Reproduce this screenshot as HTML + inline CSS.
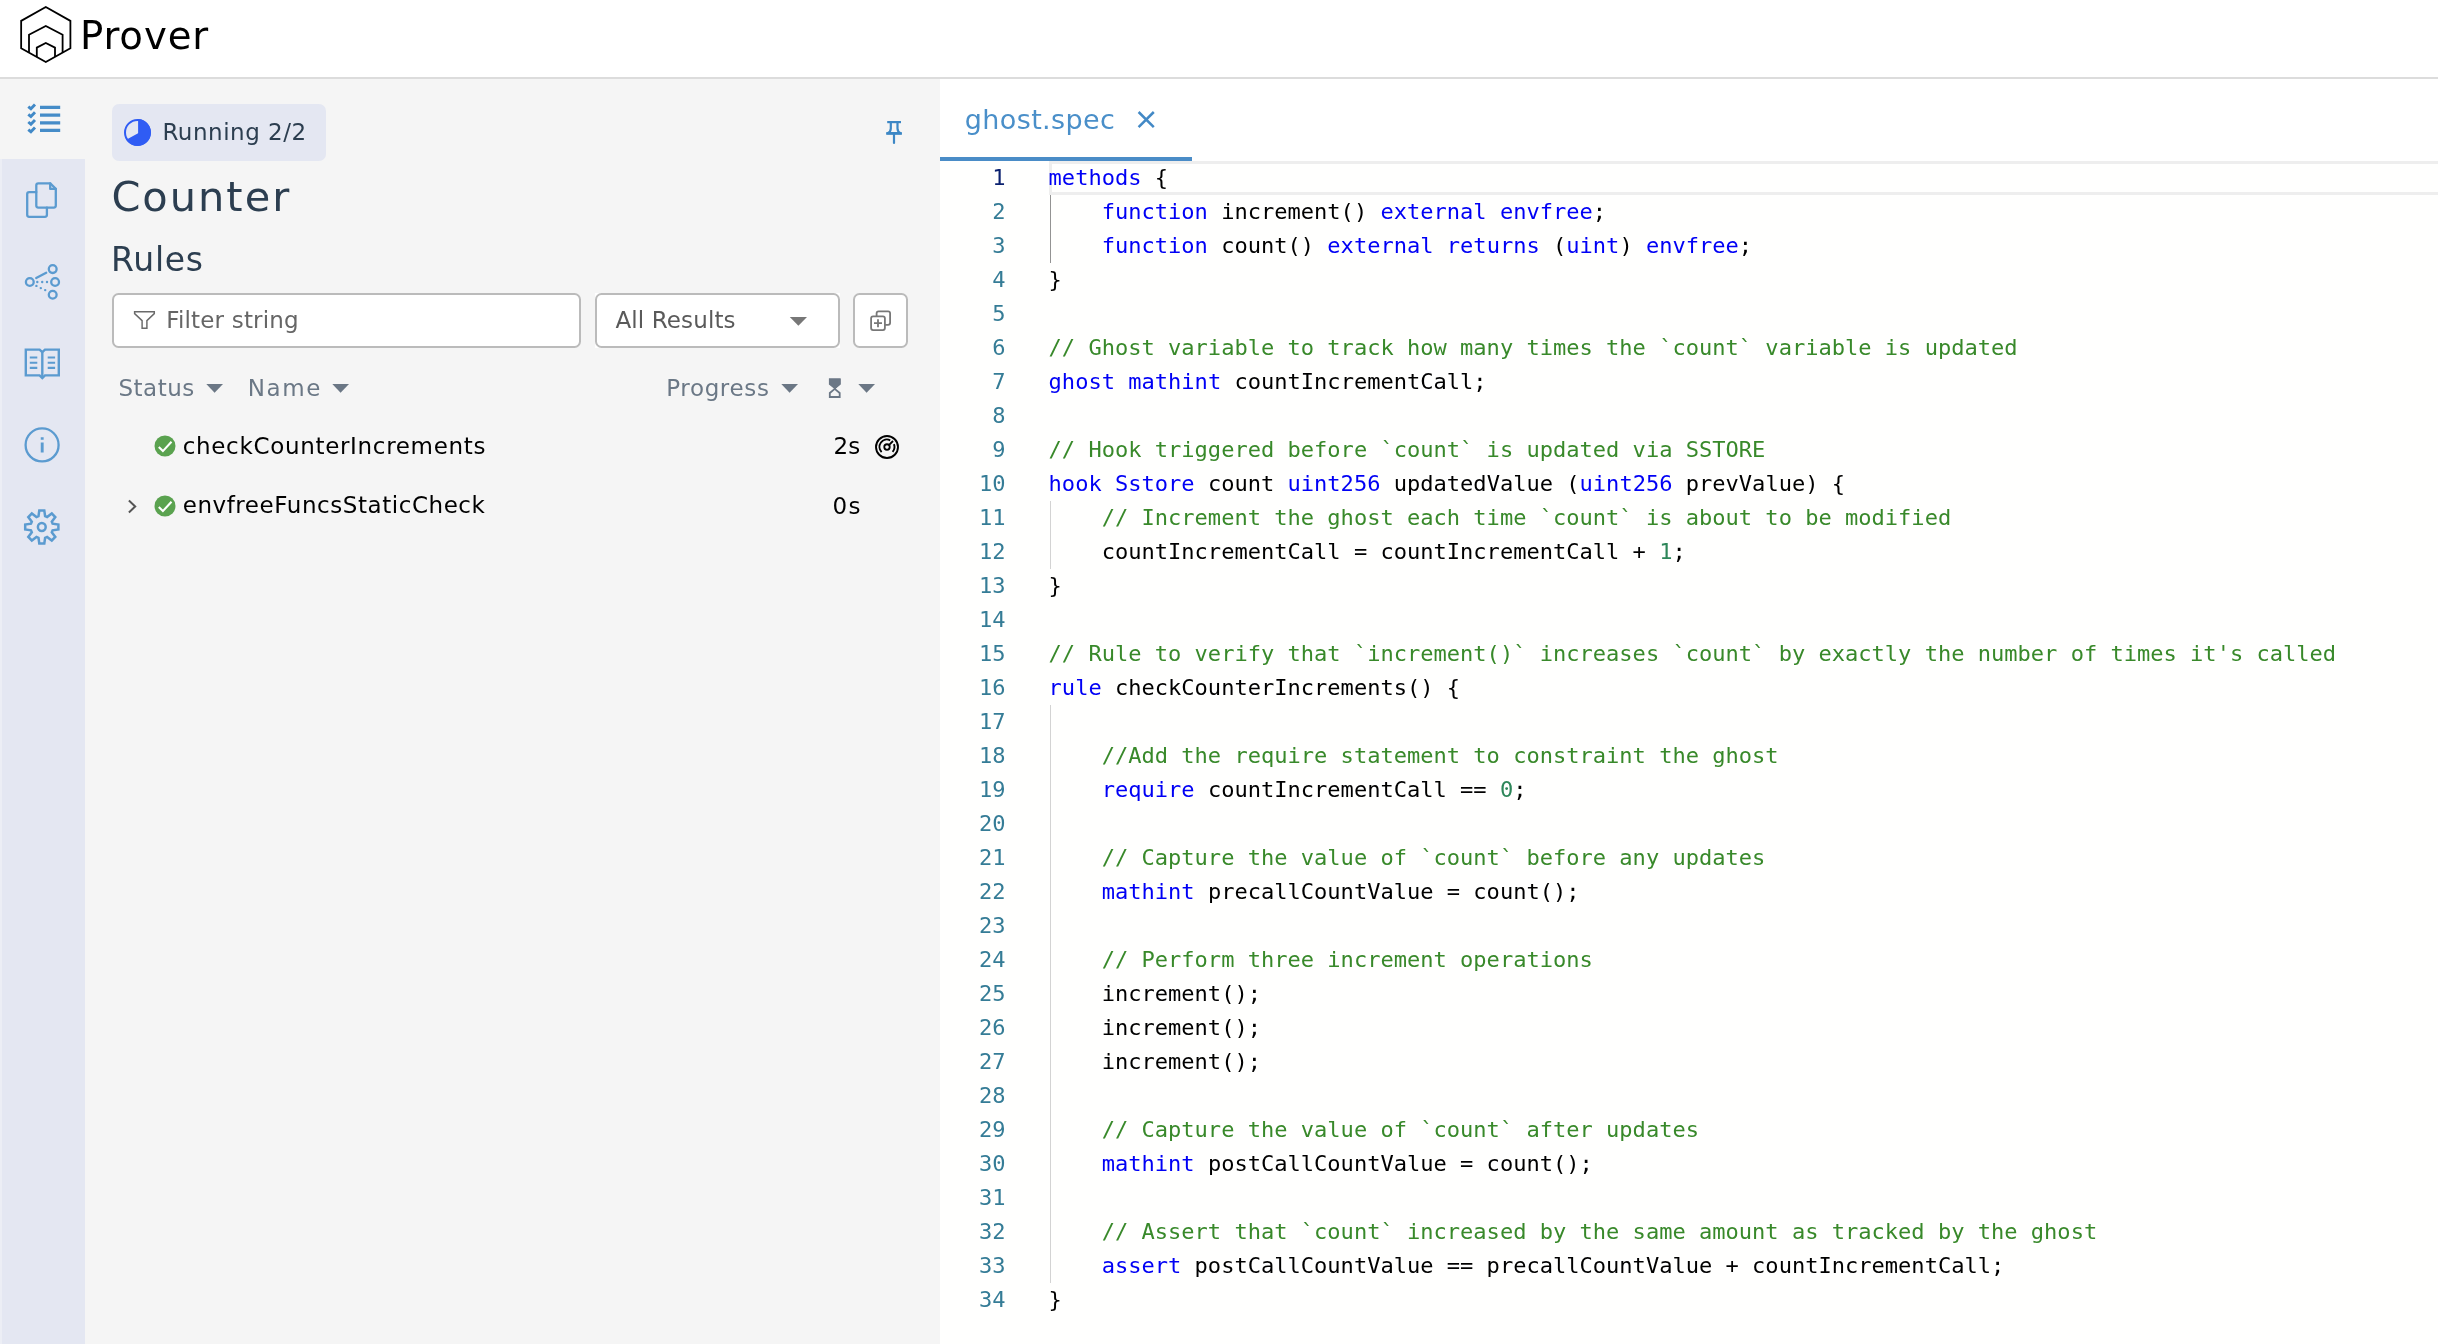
<!DOCTYPE html>
<html lang="en">
<head>
<meta charset="utf-8">
<title>Prover</title>
<style>
*{box-sizing:border-box;margin:0;padding:0}
html,body{width:2438px;height:1344px;overflow:hidden;background:#f5f5f5}
body{position:relative;font-family:"DejaVu Sans","Liberation Sans",sans-serif;color:#000}
.abs{position:absolute}
#root{position:absolute;left:0;top:0;width:2438px;height:1344px;will-change:transform}
.t{position:absolute;white-space:nowrap;line-height:1}
#hdr{position:absolute;left:0;top:0;width:2438px;height:77px;background:#fff}
#hdrline{position:absolute;left:0;top:77px;width:2438px;height:2px;background:#dcdcdc}
#nav{position:absolute;left:0;top:79px;width:85px;height:1265px;background:#e4e7f2}
#navact{position:absolute;left:0;top:79px;width:85px;height:80px;background:#f5f5f5}
#navedge{position:absolute;left:0;top:159px;width:2px;height:1185px;background:#eceef5}
#panel{position:absolute;left:85px;top:79px;width:855px;height:1265px;background:#f5f5f5}
#editor{position:absolute;left:940px;top:79px;width:1498px;height:1265px;background:#fffffe}
svg{position:absolute;overflow:visible}
.chip{position:absolute;left:112px;top:104px;width:214px;height:57px;border-radius:7px;background:#e4e7f2}
.box{position:absolute;background:#fff;border:2px solid #bbb;border-radius:6.5px}
.slate{color:#2c3e50}
.hd{color:#6b7886}
/* code */
#code{position:absolute;left:940px;top:161px;width:1498px;font-family:"DejaVu Sans Mono","Liberation Mono",monospace;font-size:22.05px;line-height:34px;color:#000}
.ln{position:relative;height:34px;white-space:pre}
.n{position:absolute;left:0;top:0;width:65.5px;text-align:right;color:#357c96}
#n1{color:#0b216f}
.c{position:absolute;left:108.6px;top:0}
.c b{font-weight:normal;color:#0000f5}
.c i{font-style:normal;color:#38892a}
.c u{text-decoration:none;color:#2d8659}
.guide{position:absolute;width:1px;background:#d3d3d3}
</style>
</head>
<body>
<div id="root">
<div id="hdr"></div><div id="hdrline"></div>
<div id="nav"></div><div id="navact"></div><div id="navedge"></div>
<div id="panel"></div>
<div id="editor"></div>
<!-- logo -->
<svg style="left:0;top:0" width="240" height="77" viewBox="0 0 240 77" fill="none" stroke="#000" stroke-width="1.8" stroke-linejoin="miter">
<path d="M45.8 7.05L70.4 20.9V48.2L45.8 62L21.15 48.2V20.9Z"/>
<path d="M29 52.6V34.7L45.8 26L62.6 34.7V52.6"/>
<path d="M36.8 57V47.6L45.8 42.9L55 47.6V57"/>
</svg>
<div class="t" id="tProver" style="left:79.9px;top:13px;font-size:38.7px;line-height:46px;letter-spacing:0.88px">Prover</div>
<!-- nav icons -->
<svg style="left:0;top:79px" width="85" height="500" viewBox="0 79 85 500" fill="none" stroke="#5b9bd0" stroke-width="2.3" stroke-linecap="round" stroke-linejoin="round">
<!-- checklist (active) -->
<g stroke="#458cc8" stroke-width="3.2" stroke-linecap="butt">
<path d="M40 107.4H60.2M40 115.1H60.2M40 122.8H60.2M40 130.4H60.2"/>
</g>
<g stroke="#4189c7" stroke-width="2.9" stroke-linecap="butt" stroke-linejoin="miter">
<path d="M28.3 106.6l2.6 2.2l4.1-4.3M28.3 114.3l2.6 2.2l4.1-4.3M28.3 122l2.6 2.2l4.1-4.3M28.3 129.6l2.6 2.2l4.1-4.3"/>
</g>
<!-- copy -->
<path d="M38.3 183.3H50.2L55.8 188.9V205.6a2 2 0 0 1 -2 2H38.3a2 2 0 0 1 -2 -2V185.3a2 2 0 0 1 2 -2Z"/>
<path d="M50.2 183.3V188.9H55.8"/>
<path d="M36.3 192.1H29.2a2 2 0 0 0 -2 2V214.8a2 2 0 0 0 2 2H44.9a2 2 0 0 0 2 -2V207.6"/>
<!-- graph -->
<circle cx="52.7" cy="269.1" r="3.9"/><circle cx="55.1" cy="282" r="3.9"/><circle cx="52.7" cy="294.8" r="3.9"/><circle cx="29.8" cy="282" r="3.9"/>
<path d="M36.2 278L46.2 272.8"/>
<path d="M37.3 282h0.01M42.2 282h0.01M47 282h0.01M36.4 285.9h0.01M40.8 288.1h0.01M45.2 290.1h0.01" stroke-width="2.4"/>
<!-- book -->
<g stroke-linejoin="miter" stroke-linecap="butt" stroke-width="2.4">
<path d="M42.3 352.2L39.6 349.6H25.8V375.4H39.6L42.3 378L45 375.4H58.8V349.6H45Z"/>
<path d="M42.3 352.2V378"/>
<path d="M29.8 357.5H37.3M29.8 362.7H37.3M29.8 367.9H37.3M47.7 357.5H55.1M47.7 362.7H55.1M47.7 367.9H55.1" stroke-width="2.1"/>
</g>
<!-- info -->
<circle cx="42.1" cy="444.9" r="16.5"/>
<path d="M42.2 437.2V439.8M42.2 442.4V452.5" stroke-width="2.9" stroke-linecap="butt"/>
<!-- gear -->
<g stroke-linejoin="miter" stroke-linecap="butt" stroke-width="2.5">
<path d="M38.5 516.2L39.3 510.4L44.3 510.4L45.1 516.2L47.1 517.0L51.8 513.5L55.3 517.0L51.8 521.7L52.6 523.7L58.4 524.5L58.4 529.5L52.6 530.3L51.8 532.3L55.3 537.0L51.8 540.5L47.1 537.0L45.1 537.8L44.3 543.6L39.3 543.6L38.5 537.8L36.5 537.0L31.8 540.5L28.3 537.0L31.8 532.3L31.0 530.3L25.2 529.5L25.2 524.5L31.0 523.7L31.8 521.7L28.3 517.0L31.8 513.5L36.5 517.0Z"/>
<circle cx="41.8" cy="527" r="3.9"/>
</g>
</svg>

<!-- panel -->
<div class="chip"></div>
<svg style="left:123px;top:118px" width="29" height="29" viewBox="-14.5 -14.5 29 29">
<circle cx="0" cy="0" r="12.5" fill="none" stroke="#2f5cf4" stroke-width="2"/>
<path d="M0.6 0.7L0.6 -13.4A13.4 13.4 0 1 1 -11.3 7.2Z" fill="#2f5cf4"/>
</svg>
<div class="t slate" id="tRunning" style="left:162.4px;top:117px;font-size:23px;line-height:30px;letter-spacing:0.52px">Running 2/2</div>
<!-- pin -->
<svg style="left:880px;top:115px" width="30" height="32" viewBox="880 115 30 32" fill="none" stroke="#3d87c5" stroke-width="2.2" stroke-linecap="butt" stroke-linejoin="round">
<path d="M887.2 122.1H901"/>
<path d="M890.8 122.1V128.5C890.8 131 889.4 132.4 887.6 133.2H900.6C898.8 132.4 897.5 131 897.5 128.5V122.1"/>
<path d="M886.2 133.5H901.9" stroke-width="2.6"/>
<path d="M894 134.5V143" stroke-linecap="round"/>
</svg>
<div class="t slate" id="tCounter" style="left:111.4px;top:172px;font-size:41.5px;line-height:50px;letter-spacing:2px">Counter</div>
<div class="t slate" id="tRules" style="left:111.1px;top:239.6px;font-size:33px;line-height:40px;letter-spacing:0.72px">Rules</div>

<div class="box" style="left:112px;top:293px;width:469px;height:55px"></div>
<svg style="left:130px;top:306px" width="30" height="28" viewBox="130 306 30 28" fill="none" stroke="#6a6a6a" stroke-width="1.45" stroke-linejoin="miter">
<path d="M134.6 311.8H154.3V313.6L146.9 320.6V328.3H142.1V320.6L134.6 313.6Z"/>
</svg>
<div class="t" id="tFilter" style="left:166.2px;top:305px;font-size:23px;line-height:30px;color:#666;letter-spacing:0.18px">Filter string</div>

<div class="abs" style="left:595px;top:293px;width:245px;height:55px;background:#fff"></div>
<div class="box" style="left:595px;top:293px;width:245px;height:55px"></div>
<div class="t" id="tAll" style="left:615.4px;top:305px;font-size:23px;line-height:30px;color:#5a5a5a;letter-spacing:0.13px">All Results</div>
<svg style="left:789px;top:316px" width="19" height="11" viewBox="0 0 19 11"><path d="M0.8 1H18L9.4 9.8Z" fill="#777"/></svg>

<div class="box" style="left:853px;top:293px;width:55px;height:55px"></div>
<svg style="left:866px;top:306px" width="30" height="30" viewBox="866 306 30 30" fill="none" stroke="#777" stroke-width="1.8" stroke-linejoin="round" stroke-linecap="butt">
<path d="M876.6 316.3V313.3a2 2 0 0 1 2 -2H888.1a2 2 0 0 1 2 2V322.8a2 2 0 0 1 -2 2H885"/>
<rect x="871.1" y="316.3" width="13.8" height="13.8" rx="2"/>
<path d="M878 319.2V327.2M874 323.2H882"/>
</svg>

<!-- column headers -->
<div class="t hd" id="tStatus" style="left:118.5px;top:373px;font-size:23px;line-height:30px;letter-spacing:0.5px">Status</div>
<svg style="left:206px;top:383px" width="18" height="11" viewBox="0 0 18 11"><path d="M0.3 0.9H17L8.6 9.8Z" fill="#6b7785"/></svg>
<div class="t hd" id="tName" style="left:247.8px;top:373px;font-size:23px;line-height:30px;letter-spacing:1.6px">Name</div>
<svg style="left:332px;top:383px" width="18" height="11" viewBox="0 0 18 11"><path d="M0.3 0.9H17L8.6 9.8Z" fill="#6b7785"/></svg>
<div class="t hd" id="tProgress" style="left:666.2px;top:373px;font-size:23px;line-height:30px;letter-spacing:0.65px">Progress</div>
<svg style="left:781px;top:383px" width="18" height="11" viewBox="0 0 18 11"><path d="M0.3 0.9H17L8.6 9.8Z" fill="#6b7785"/></svg>
<svg style="left:826px;top:375.5px" width="18" height="24" viewBox="826 375 18 24">
<path d="M828.9 377.6H840.6V383.3L834.75 388.5Z M828.9 383.3L834.75 388.5" fill="#6b7785"/>
<path d="M828.9 377.6H840.6V383.4L835.6 387.6L840.6 391.6V396.9H828.9V391.6L833.9 387.6L828.9 383.4Z" fill="#6b7785"/>
<path d="M830.7 395.1V392.4L834.75 389L838.8 392.4V395.1Z" fill="#f5f5f5"/>
</svg>
<svg style="left:858px;top:383px" width="18" height="11" viewBox="0 0 18 11"><path d="M0.3 0.9H17L8.6 9.8Z" fill="#6b7785"/></svg>

<!-- rows -->
<svg style="left:152.5px;top:434px" width="24" height="24" viewBox="-12 -12 24 24"><circle r="10.5" fill="#5aa24f"/><path d="M-6.2 1L-2.1 5.1L6.5 -4.3" fill="none" stroke="#fff" stroke-width="2.1"/></svg>
<div class="t" id="tCheck" style="left:182.7px;top:430.8px;font-size:23px;line-height:30px;letter-spacing:0.68px">checkCounterIncrements</div>
<div class="t" id="t2s" style="left:833.4px;top:430.6px;font-size:23px;line-height:30px;letter-spacing:0.3px">2s</div>
<svg style="left:873px;top:432.6px" width="28" height="28" viewBox="-14 -14 28 28" fill="none" stroke="#000" stroke-width="1.9" stroke-linecap="butt">
<circle r="11"/>
<circle r="2.7"/>
<path d="M1.9 -1.9L6 -6"/>
<path d="M-5.4 5.1A7.4 7.4 0 0 1 3.2 -6.7"/>
<path d="M6.9 -2.8A7.4 7.4 0 0 1 5.6 4.9"/>
</svg>

<svg style="left:126px;top:498px" width="14" height="18" viewBox="126 498 14 18" fill="none" stroke="#555" stroke-width="2"><path d="M128.9 500.6L135.2 506.5L128.9 512.4"/></svg>
<svg style="left:152.5px;top:494.1px" width="24" height="24" viewBox="-12 -12 24 24"><circle r="10.5" fill="#5aa24f"/><path d="M-6.2 1L-2.1 5.1L6.5 -4.3" fill="none" stroke="#fff" stroke-width="2.1"/></svg>
<div class="t" id="tEnv" style="left:182.7px;top:489.8px;font-size:23px;line-height:30px;letter-spacing:0.555px">envfreeFuncsStaticCheck</div>
<div class="t" id="t0s" style="left:832.6px;top:490.8px;font-size:23px;line-height:30px;letter-spacing:1.2px">0s</div>
<div class="abs" id="tabbar" style="left:940px;top:79px;width:1498px;height:82px;background:#fff"></div>
<!-- editor tab -->
<div class="t" id="tTab" style="left:964.75px;top:102.8px;font-size:27px;line-height:34px;color:#4a8fc9;letter-spacing:0.39px">ghost.spec</div>
<svg style="left:1135px;top:109px" width="22" height="22" viewBox="1135 109 22 22" fill="none" stroke="#4389c6" stroke-width="2.5"><path d="M1138.6 112L1153.8 127.2M1153.8 112L1138.6 127.2"/></svg>
<div class="abs" style="left:940px;top:157px;width:252px;height:4px;background:#4a8cc7"></div>
<!-- current line box -->
<div class="abs" style="left:1049px;top:161px;width:1390px;height:34px;border:3px solid #eee;border-right:none"></div>
<!-- indent guides -->
<div class="guide" style="left:1050px;top:195px;height:68px;background:#939393"></div>
<div class="guide" style="left:1050px;top:501px;height:68px"></div>
<div class="guide" style="left:1050px;top:705px;height:578px"></div>
<div id="code">
<div class="ln"><span class="n" id="n1">1</span><span class="c"><b>methods</b> {</span></div>
<div class="ln"><span class="n">2</span><span class="c">    <b>function</b> increment() <b>external</b> <b>envfree</b>;</span></div>
<div class="ln"><span class="n">3</span><span class="c">    <b>function</b> count() <b>external</b> <b>returns</b> (<b>uint</b>) <b>envfree</b>;</span></div>
<div class="ln"><span class="n">4</span><span class="c">}</span></div>
<div class="ln"><span class="n">5</span><span class="c"></span></div>
<div class="ln"><span class="n">6</span><span class="c"><i>// Ghost variable to track how many times the `count` variable is updated</i></span></div>
<div class="ln"><span class="n">7</span><span class="c"><b>ghost</b> <b>mathint</b> countIncrementCall;</span></div>
<div class="ln"><span class="n">8</span><span class="c"></span></div>
<div class="ln"><span class="n">9</span><span class="c"><i>// Hook triggered before `count` is updated via SSTORE</i></span></div>
<div class="ln"><span class="n">10</span><span class="c"><b>hook</b> <b>Sstore</b> count <b>uint256</b> updatedValue (<b>uint256</b> prevValue) {</span></div>
<div class="ln"><span class="n">11</span><span class="c">    <i>// Increment the ghost each time `count` is about to be modified</i></span></div>
<div class="ln"><span class="n">12</span><span class="c">    countIncrementCall = countIncrementCall + <u>1</u>;</span></div>
<div class="ln"><span class="n">13</span><span class="c">}</span></div>
<div class="ln"><span class="n">14</span><span class="c"></span></div>
<div class="ln"><span class="n">15</span><span class="c"><i>// Rule to verify that `increment()` increases `count` by exactly the number of times it's called</i></span></div>
<div class="ln"><span class="n">16</span><span class="c"><b>rule</b> checkCounterIncrements() {</span></div>
<div class="ln"><span class="n">17</span><span class="c"></span></div>
<div class="ln"><span class="n">18</span><span class="c">    <i>//Add the require statement to constraint the ghost</i></span></div>
<div class="ln"><span class="n">19</span><span class="c">    <b>require</b> countIncrementCall == <u>0</u>;</span></div>
<div class="ln"><span class="n">20</span><span class="c"></span></div>
<div class="ln"><span class="n">21</span><span class="c">    <i>// Capture the value of `count` before any updates</i></span></div>
<div class="ln"><span class="n">22</span><span class="c">    <b>mathint</b> precallCountValue = count();</span></div>
<div class="ln"><span class="n">23</span><span class="c"></span></div>
<div class="ln"><span class="n">24</span><span class="c">    <i>// Perform three increment operations</i></span></div>
<div class="ln"><span class="n">25</span><span class="c">    increment();</span></div>
<div class="ln"><span class="n">26</span><span class="c">    increment();</span></div>
<div class="ln"><span class="n">27</span><span class="c">    increment();</span></div>
<div class="ln"><span class="n">28</span><span class="c"></span></div>
<div class="ln"><span class="n">29</span><span class="c">    <i>// Capture the value of `count` after updates</i></span></div>
<div class="ln"><span class="n">30</span><span class="c">    <b>mathint</b> postCallCountValue = count();</span></div>
<div class="ln"><span class="n">31</span><span class="c"></span></div>
<div class="ln"><span class="n">32</span><span class="c">    <i>// Assert that `count` increased by the same amount as tracked by the ghost</i></span></div>
<div class="ln"><span class="n">33</span><span class="c">    <b>assert</b> postCallCountValue == precallCountValue + countIncrementCall;</span></div>
<div class="ln"><span class="n">34</span><span class="c">}</span></div></div>
</div>
</body>
</html>
